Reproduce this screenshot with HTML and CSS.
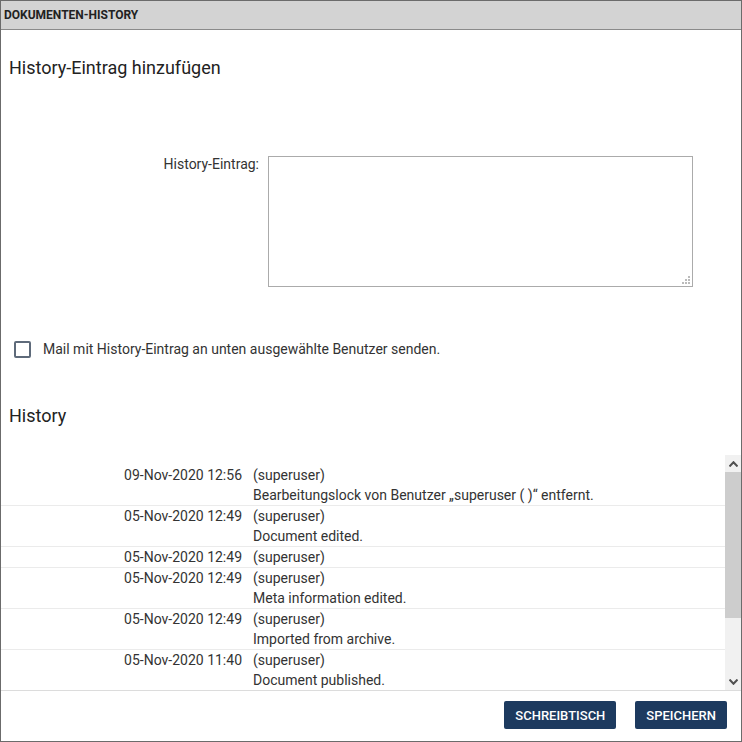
FILE: index.html
```html
<!DOCTYPE html>
<html lang="de">
<head>
<meta charset="utf-8">
<title>Dokumenten-History</title>
<link rel="stylesheet" href="styles.css">
</head>
<body>
<div class="dialog">
  <div class="titlebar">DOKUMENTEN-HISTORY</div>
  <div class="content">
    <h2 class="heading first">History-Eintrag hinzufügen</h2>
    <div class="form-row">
      <label class="form-label" for="entry">History-Eintrag:</label>
      <div class="textarea-wrap">
        <textarea id="entry" class="entry"></textarea>
        <svg class="grip" width="9" height="9" viewBox="0 0 9 9">
          <rect x="6" y="0" width="2" height="2" fill="#bbb"/>
          <rect x="3" y="3" width="2" height="2" fill="#bbb"/>
          <rect x="6" y="3" width="2" height="2" fill="#bbb"/>
          <rect x="0" y="6" width="2" height="2" fill="#bbb"/>
          <rect x="3" y="6" width="2" height="2" fill="#bbb"/>
          <rect x="6" y="6" width="2" height="2" fill="#bbb"/>
        </svg>
      </div>
    </div>
    <div class="check-row">
      <span class="checkbox"></span>
      <span class="check-label">Mail mit History-Eintrag an unten ausgewählte Benutzer senden.</span>
    </div>
    <h2 class="heading second">History</h2>
  </div>
  <div class="history">
    <div class="rows">
      <div class="row"><div class="date">09-Nov-2020 12:56</div><div class="info"><div>(superuser)</div><div>Bearbeitungslock von Benutzer „superuser ( )“ entfernt.</div></div></div>
      <div class="row"><div class="date">05-Nov-2020 12:49</div><div class="info"><div>(superuser)</div><div>Document edited.</div></div></div>
      <div class="row"><div class="date">05-Nov-2020 12:49</div><div class="info"><div>(superuser)</div></div></div>
      <div class="row"><div class="date">05-Nov-2020 12:49</div><div class="info"><div>(superuser)</div><div>Meta information edited.</div></div></div>
      <div class="row"><div class="date">05-Nov-2020 12:49</div><div class="info"><div>(superuser)</div><div>Imported from archive.</div></div></div>
      <div class="row"><div class="date">05-Nov-2020 11:40</div><div class="info"><div>(superuser)</div><div>Document published.</div></div></div>
    </div>
    <div class="scrollbar">
      <div class="sb-btn">
        <svg width="9" height="6" viewBox="0 0 9 6"><path d="M0.5 5.5 L4.5 1.2 L8.5 5.5" fill="none" stroke="#505050" stroke-width="2"/></svg>
      </div>
      <div class="sb-thumb"></div>
      <div class="sb-track"></div>
      <div class="sb-btn">
        <svg width="9" height="6" viewBox="0 0 9 6"><path d="M0.5 0.5 L4.5 4.8 L8.5 0.5" fill="none" stroke="#505050" stroke-width="2"/></svg>
      </div>
    </div>
  </div>
  <div class="footer">
    <button class="btn">SCHREIBTISCH</button>
    <button class="btn">SPEICHERN</button>
  </div>
</div>
</body>
</html>
```

FILE: styles.css
```css
* { box-sizing: border-box; }
html, body { margin: 0; padding: 0; background: #fff; }
body {
  font-family: Roboto, "Liberation Sans", sans-serif;
  font-size: 14px;
  color: #333;
}
.dialog {
  width: 742px;
  height: 742px;
  border: 1px solid #6b6b6b;
  display: flex;
  flex-direction: column;
  overflow: hidden;
}
.titlebar {
  height: 29px;
  flex: none;
  background: #d3d3d3;
  border-bottom: 1px solid #8a8a8a;
  font-size: 12px;
  font-weight: 700;
  color: #222;
  padding: 0 3px;
  line-height: 28px;
}
.content {
  padding: 0 8px;
  flex: none;
}
.heading {
  font-size: 18px;
  font-weight: 400;
  line-height: 22px;
  color: #222;
  margin: 0;
}
.heading.first { margin-top: 27px; }
.heading.second { margin-top: 47px; margin-bottom: 28px; }
.form-row {
  margin-top: 77px;
  display: grid;
  grid-template-columns: 250px 425px;
  column-gap: 9px;
  align-items: start;
}
.form-label {
  text-align: right;
  line-height: 16px;
  color: #333;
}
.textarea-wrap {
  position: relative;
  width: 425px;
  height: 131px;
}
.entry {
  display: block;
  width: 425px;
  height: 131px;
  border: 1px solid #ababab;
  border-radius: 0;
  resize: none;
  margin: 0;
  font-family: inherit;
  font-size: 14px;
  outline: none;
}
.grip {
  position: absolute;
  right: 2px;
  bottom: 2px;
}
.check-row {
  margin-top: 54px;
  display: flex;
  align-items: center;
  padding-left: 5px;
  gap: 12px;
}
.checkbox {
  width: 17px;
  height: 17px;
  border: 2px solid #5e6a7a;
  border-radius: 2px;
  flex: none;
}
.check-label { line-height: 17px; color: #333; }
.history {
  flex: none;
  height: 235px;
  display: flex;
  overflow: hidden;
}
.rows {
  flex: 1;
  padding-top: 10px;
}
.row {
  display: flex;
  border-bottom: 1px solid #ebebeb;
  line-height: 20px;
}
.date {
  width: 241px;
  flex: none;
  text-align: right;
}
.info {
  padding-left: 11px;
}
.scrollbar {
  width: 16px;
  flex: none;
  background: #f1f1f1;
  display: flex;
  flex-direction: column;
}
.sb-btn {
  height: 17px;
  flex: none;
  display: flex;
  align-items: center;
  justify-content: center;
}
.sb-thumb {
  height: 146px;
  background: #cdcdcd;
  flex: none;
}
.sb-track { flex: 1; }
.footer {
  flex: 1;
  border-top: 1px solid #dcdcdc;
  display: flex;
  justify-content: flex-end;
  align-items: flex-start;
  gap: 19px;
  padding: 10px 14px 0 0;
}
.btn {
  height: 28px;
  padding: 0 11px;
  background: #1d3a5f;
  color: #fff;
  border: none;
  border-radius: 2px;
  font-family: Roboto, "Liberation Sans", sans-serif;
  font-size: 13px;
  font-weight: 500;
}
```
